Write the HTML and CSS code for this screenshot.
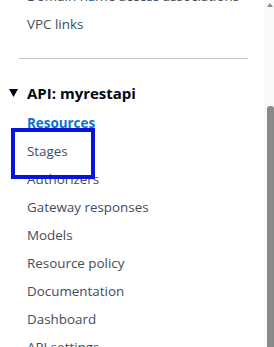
FILE: index.html
```html
<!DOCTYPE html>
<html lang="en">
<head>
  <meta charset="UTF-8" />
  <meta name="viewport" content="width=device-width, initial-scale=1" />
  <title>API Gateway navigation</title>
  <link rel="stylesheet" href="styles.css">
</head>
<body>
  <nav class="side-nav">
    <ul class="nav-list top-list">
      <li>Domain name access associations</li>
      <li>VPC links</li>
    </ul>

    <hr class="divider">

    <div class="api-section">
      <h2 class="api-title">
        <svg class="caret" width="9" height="8" viewBox="0 0 9 8"><path d="M0 0 H9 L4.5 8 Z" fill="#000716"/></svg>
        API: myrestapi
      </h2>
      <ul class="nav-list">
        <li class="active">Resources</li>
        <li>Stages</li>
        <li>Authorizers</li>
        <li>Gateway responses</li>
        <li>Models</li>
        <li>Resource policy</li>
        <li>Documentation</li>
        <li>Dashboard</li>
        <li>API settings</li>
      </ul>
    </div>
  </nav>

  <!-- annotation box round "Stages" -->
  <div class="highlight"></div>

  <!-- fake scrollbar -->
  <div class="scrollbar">
    <span class="scroll-up"></span>
    <span class="scroll-thumb"></span>
  </div>
</body>
</html>
```

FILE: styles.css
```css
body {
  margin: 0;
  height: 347px;
  overflow: hidden;
  background: #fff;
  font-family: 'Open Sans', 'Noto Sans', sans-serif;
  color: #414d5c;
}

.side-nav {
  width: 264px;
}

.nav-list {
  list-style: none;
  margin: 0;
  padding: 0 0 0 27px;
}

.nav-list li {
  font-size: 13.4px;
  line-height: 28px;
  white-space: nowrap;
}

.top-list {
  margin-top: -18px;
}

.nav-list li.active {
  color: #0972d3;
  font-weight: 700;
  text-decoration: underline;
  text-underline-offset: 2px;
}

.divider {
  margin: 20px 16px 0 19px;
  border: none;
  border-top: 1px solid #c6c6cd;
  height: 0;
}

.api-section {
  margin-top: 20px;
}

.api-title {
  margin: 0;
  padding: 0 0 2px 9px;
  display: flex;
  align-items: center;
  gap: 9px;
  font-size: 15px;
  line-height: 28px;
  font-weight: 700;
  color: #000716;
}

.caret {
  flex-shrink: 0;
}

.highlight {
  position: absolute;
  left: 11px;
  top: 128px;
  width: 76px;
  height: 43px;
  border: 4px solid #0a14d8;
}

.scrollbar {
  position: absolute;
  top: 0;
  right: 0;
  width: 10px;
  height: 347px;
  background: #f9f9f9;
}

.scroll-up {
  position: absolute;
  top: 3px;
  left: 3px;
  width: 0;
  height: 0;
  border-left: 3.5px solid transparent;
  border-right: 3.5px solid transparent;
  border-bottom: 4px solid #8a8a8a;
}

.scroll-thumb {
  position: absolute;
  top: 106px;
  left: 3px;
  width: 7px;
  bottom: 0;
  background: #8a8a8a;
  border-radius: 3px 3px 0 0;
}
```
